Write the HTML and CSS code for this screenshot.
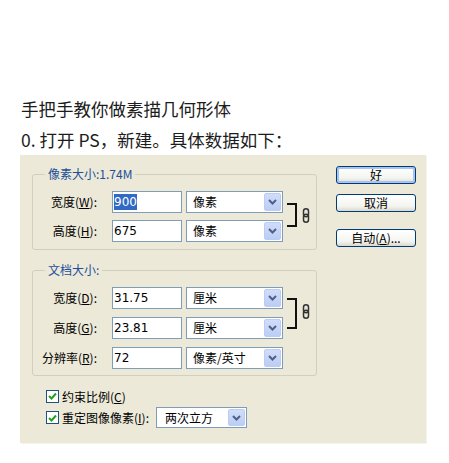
FILE: index.html
```html
<!DOCTYPE html>
<html lang="zh">
<head>
<meta charset="utf-8">
<link rel="stylesheet" href="styles.css">
</head>
<body>
<div class="intro">
  <p class="line line-1">手把手教你做素描几何形体</p>
  <p class="line line-2">0. 打开 PS，新建。具体数据如下：</p>
</div>
<div class="dialog">
  <div class="main-col">
    <fieldset class="group group-1">
      <legend>像素大小:1.74M</legend>
      <div class="grid grid-1">
        <label class="lbl">宽度(<u>W</u>):</label>
        <div class="input"><span class="sel">900</span></div>
        <div class="select"><span>像素</span><i class="arrow"><svg width="9" height="6" viewBox="0 0 9 6"><path d="M1 1l3.5 3.5L8 1" fill="none" stroke="#4d6185" stroke-width="2"/></svg></i></div>
        <div class="bracket b-1"></div>
        <div class="chain"><svg width="8" height="15" viewBox="0 0 8 15"><rect x="1.5" y="0.8" width="5" height="8" rx="2.5" fill="#e8e8e0" stroke="#333" stroke-width="1.5"/><rect x="1.5" y="6.2" width="5" height="8" rx="2.5" fill="none" stroke="#333" stroke-width="1.5"/></svg></div>
        <label class="lbl">高度(<u>H</u>):</label>
        <div class="input">675</div>
        <div class="select"><span>像素</span><i class="arrow"><svg width="9" height="6" viewBox="0 0 9 6"><path d="M1 1l3.5 3.5L8 1" fill="none" stroke="#4d6185" stroke-width="2"/></svg></i></div>
      </div>
    </fieldset>
    <fieldset class="group group-2">
      <legend>文档大小:</legend>
      <div class="grid grid-2">
        <label class="lbl">宽度(<u>D</u>):</label>
        <div class="input">31.75</div>
        <div class="select"><span>厘米</span><i class="arrow"><svg width="9" height="6" viewBox="0 0 9 6"><path d="M1 1l3.5 3.5L8 1" fill="none" stroke="#4d6185" stroke-width="2"/></svg></i></div>
        <div class="bracket b-2"></div>
        <div class="chain"><svg width="8" height="15" viewBox="0 0 8 15"><rect x="1.5" y="0.8" width="5" height="8" rx="2.5" fill="#e8e8e0" stroke="#333" stroke-width="1.5"/><rect x="1.5" y="6.2" width="5" height="8" rx="2.5" fill="none" stroke="#333" stroke-width="1.5"/></svg></div>
        <label class="lbl">高度(<u>G</u>):</label>
        <div class="input">23.81</div>
        <div class="select"><span>厘米</span><i class="arrow"><svg width="9" height="6" viewBox="0 0 9 6"><path d="M1 1l3.5 3.5L8 1" fill="none" stroke="#4d6185" stroke-width="2"/></svg></i></div>
        <label class="lbl">分辨率(<u>R</u>):</label>
        <div class="input">72</div>
        <div class="select"><span>像素/英寸</span><i class="arrow"><svg width="9" height="6" viewBox="0 0 9 6"><path d="M1 1l3.5 3.5L8 1" fill="none" stroke="#4d6185" stroke-width="2"/></svg></i></div>
      </div>
    </fieldset>
    <div class="check-row check-1">
      <span class="box"><svg width="9" height="8" viewBox="0 0 9 8"><path d="M1 4l2.5 2.5L8 1.5" fill="none" stroke="#21a121" stroke-width="2"/></svg></span>
      <span>约束比例(<u>C</u>)</span>
    </div>
    <div class="check-row check-2">
      <span class="box"><svg width="9" height="8" viewBox="0 0 9 8"><path d="M1 4l2.5 2.5L8 1.5" fill="none" stroke="#21a121" stroke-width="2"/></svg></span>
      <span>重定图像像素(<u>I</u>):</span>
      <div class="select select-wide"><span>两次立方</span><i class="arrow"><svg width="9" height="6" viewBox="0 0 9 6"><path d="M1 1l3.5 3.5L8 1" fill="none" stroke="#4d6185" stroke-width="2"/></svg></i></div>
    </div>
  </div>
  <div class="btn-col">
    <button class="btn btn-default">好</button>
    <button class="btn">取消</button>
    <button class="btn btn-auto">自动(<u>A</u>)...</button>
  </div>
</div>
</body>
</html>
```

FILE: styles.css
```css
html, body {
  margin: 0;
  padding: 0;
  background: #ffffff;
}
body {
  width: 449px;
  height: 463px;
  overflow: hidden;
  font-family: "Noto Sans CJK SC", "Noto Sans", sans-serif;
}
.intro {
  padding-top: 92px;
  padding-left: 21px;
}
.line {
  margin: 0;
  font-size: 17.5px;
  color: #1c1c1c;
  white-space: nowrap;
}
.line-1 { height: 33px; line-height: 33px; }
.line-2 { height: 30px; line-height: 30px; }

.dialog {
  margin-left: 20px;
  width: 406px;
  height: 288px;
  box-sizing: border-box;
  padding: 11px 0 0 12px;
  background: #ece9d8;
  display: flex;
  gap: 19px;
  font-size: 12px;
  color: #000;
  box-shadow: 1px 1px 0 #f4f3ec;
}
.main-col {
  width: 285px;
  display: flex;
  flex-direction: column;
}
.group {
  margin: 0;
  padding: 0 0 7px 0;
  border: 1px solid #d0d0bf;
  border-radius: 3px;
  min-width: 0;
}
.group-1 { margin-top: 1px; }
.group-2 { margin-top: 13px; padding-bottom: 6px; }
.group legend {
  margin-left: 12px;
  padding: 0 3px;
  line-height: 14px;
  font-size: 12px;
  color: #1d4f9a;
}
.grid {
  display: grid;
  grid-template-columns: 75px 70px 97px 11px 8px;
  column-gap: 4px;
  margin-top: 10px;
  grid-auto-rows: 22px;
}
.grid-1 { row-gap: 7px; }
.grid-2 { row-gap: 8px; }
.lbl {
  text-align: right;
  padding-right: 11px;
  line-height: 22px;
  white-space: nowrap;
}
.input {
  box-sizing: border-box;
  border: 1px solid #7f9db9;
  background: #fff;
  padding-left: 1px;
  line-height: 20px;
  font-family: "DejaVu Sans", "Liberation Sans", sans-serif;
  font-size: 12px;
}
.sel {
  background: #316ac5;
  color: #fff;
  padding: 1px 0;
}
.select {
  box-sizing: border-box;
  border: 1px solid #7f9db9;
  background: #fff;
  display: flex;
  align-items: center;
  justify-content: space-between;
  padding: 1px 1px 1px 6px;
  line-height: 18px;
}
.arrow {
  width: 17px;
  align-self: stretch;
  box-sizing: border-box;
  border: 1px solid #bccdf5;
  border-radius: 2px;
  background: linear-gradient(#d1dcfa, #bccdf4);
  display: flex;
  align-items: center;
  justify-content: center;
}
.bracket {
  grid-column: 4;
  grid-row: 1 / span 2;
  align-self: start;
  box-sizing: border-box;
  width: 10px;
  border: 2px solid #111;
  border-left: none;
  margin-top: 12px;
}
.b-1 { height: 24px; }
.b-2 { height: 31px; margin-top: 11px; }
.chain {
  grid-column: 5;
  grid-row: 1 / span 2;
  align-self: center;
  display: flex;
  margin-top: -3px;
}
.check-row {
  display: flex;
  align-items: center;
  gap: 3px;
  padding-left: 14px;
  white-space: nowrap;
}
.check-1 { margin-top: 12px; height: 16px; }
.check-2 { margin-top: 3px; height: 21px; }
.box {
  width: 13px;
  height: 13px;
  box-sizing: border-box;
  border: 1px solid #1c5180;
  background: #fff;
  display: flex;
  align-items: center;
  justify-content: center;
}
.select-wide {
  width: 91px;
  height: 21px;
  margin-left: 4px;
  padding-left: 8px;
}
.btn-col {
  display: flex;
  flex-direction: column;
  width: 80px;
}
.btn {
  width: 80px;
  height: 18px;
  margin: 0;
  padding: 0;
  border: 1px solid #003c74;
  border-radius: 3px;
  background: linear-gradient(#ffffff, #f4f4f0 70%, #dcd8cc);
  font-family: "Noto Sans CJK SC", "Noto Sans", sans-serif;
  font-size: 12px;
  line-height: 16px;
  color: #000;
}
.btn-default {
  margin-top: 0;
  box-shadow: inset 0 0 0 2px #a9c2f0;
}
.btn + .btn { margin-top: 10px; }
.btn-auto.btn { margin-top: 17px; }
```
